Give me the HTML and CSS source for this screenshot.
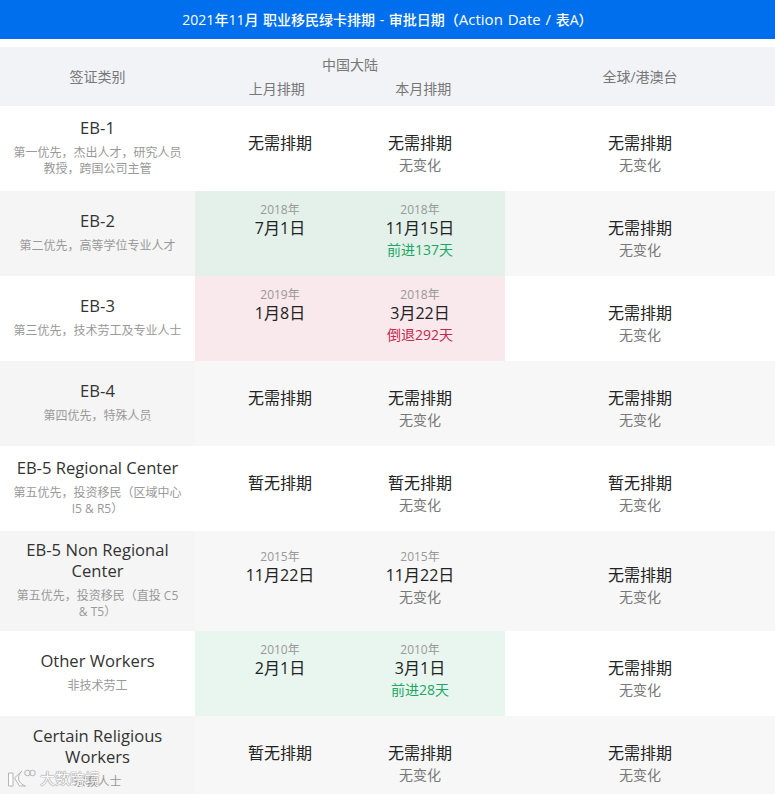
FILE: index.html
```html
<!DOCTYPE html>
<html lang="zh-CN">
<head>
<meta charset="utf-8">
<title>职业移民绿卡排期</title>
<link rel="stylesheet" href="styles.css">
</head>
<body>
<div class="page">
  <h1 class="banner">2021年11月 职业移民绿卡排期 - 审批日期（<span class="latin">Action Date /</span> 表A）</h1>
  <div class="table">
    <div class="row head">
      <div class="cat">签证类别</div>
      <div class="china">
        <div class="china-title">中国大陆</div>
        <div class="head-pair"><div>上月排期</div><div>本月排期</div></div>
      </div>
      <div class="world">全球/港澳台</div>
    </div>

    <div class="row">
      <div class="cat"><div class="name">EB-1</div><div class="desc">第一优先，杰出人才，研究人员<br>教授，跨国公司主管</div></div>
      <div class="pair">
        <div class="date"><div class="year"></div><div class="day">无需排期</div><div class="note"></div></div>
        <div class="date"><div class="year"></div><div class="day">无需排期</div><div class="note">无变化</div></div>
      </div>
      <div class="date world"><div class="year"></div><div class="day">无需排期</div><div class="note">无变化</div></div>
    </div>

    <div class="row alt">
      <div class="cat"><div class="name">EB-2</div><div class="desc">第二优先，高等学位专业人才</div></div>
      <div class="pair green">
        <div class="date"><div class="year">2018年</div><div class="day">7月1日</div><div class="note"></div></div>
        <div class="date"><div class="year">2018年</div><div class="day">11月15日</div><div class="note up">前进137天</div></div>
      </div>
      <div class="date world"><div class="year"></div><div class="day">无需排期</div><div class="note">无变化</div></div>
    </div>

    <div class="row">
      <div class="cat"><div class="name">EB-3</div><div class="desc">第三优先，技术劳工及专业人士</div></div>
      <div class="pair red">
        <div class="date"><div class="year">2019年</div><div class="day">1月8日</div><div class="note"></div></div>
        <div class="date"><div class="year">2018年</div><div class="day">3月22日</div><div class="note down">倒退292天</div></div>
      </div>
      <div class="date world"><div class="year"></div><div class="day">无需排期</div><div class="note">无变化</div></div>
    </div>

    <div class="row alt">
      <div class="cat"><div class="name">EB-4</div><div class="desc">第四优先，特殊人员</div></div>
      <div class="pair">
        <div class="date"><div class="year"></div><div class="day">无需排期</div><div class="note"></div></div>
        <div class="date"><div class="year"></div><div class="day">无需排期</div><div class="note">无变化</div></div>
      </div>
      <div class="date world"><div class="year"></div><div class="day">无需排期</div><div class="note">无变化</div></div>
    </div>

    <div class="row">
      <div class="cat"><div class="name">EB-5 Regional Center</div><div class="desc">第五优先，投资移民（区域中心<br>I5 &amp; R5）</div></div>
      <div class="pair">
        <div class="date"><div class="year"></div><div class="day">暂无排期</div><div class="note"></div></div>
        <div class="date"><div class="year"></div><div class="day">暂无排期</div><div class="note">无变化</div></div>
      </div>
      <div class="date world"><div class="year"></div><div class="day">暂无排期</div><div class="note">无变化</div></div>
    </div>

    <div class="row alt">
      <div class="cat"><div class="name">EB-5 Non Regional<br>Center</div><div class="desc">第五优先，投资移民（直投 C5<br>&amp; T5）</div></div>
      <div class="pair">
        <div class="date"><div class="year">2015年</div><div class="day">11月22日</div><div class="note"></div></div>
        <div class="date"><div class="year">2015年</div><div class="day">11月22日</div><div class="note">无变化</div></div>
      </div>
      <div class="date world"><div class="year"></div><div class="day">无需排期</div><div class="note">无变化</div></div>
    </div>

    <div class="row">
      <div class="cat"><div class="name">Other Workers</div><div class="desc">非技术劳工</div></div>
      <div class="pair mint">
        <div class="date"><div class="year">2010年</div><div class="day">2月1日</div><div class="note"></div></div>
        <div class="date"><div class="year">2010年</div><div class="day">3月1日</div><div class="note up">前进28天</div></div>
      </div>
      <div class="date world"><div class="year"></div><div class="day">无需排期</div><div class="note">无变化</div></div>
    </div>

    <div class="row alt">
      <div class="cat"><div class="name">Certain Religious<br>Workers</div><div class="desc">宗教人士</div></div>
      <div class="pair">
        <div class="date"><div class="year"></div><div class="day">暂无排期</div><div class="note"></div></div>
        <div class="date"><div class="year"></div><div class="day">无需排期</div><div class="note">无变化</div></div>
      </div>
      <div class="date world"><div class="year"></div><div class="day">无需排期</div><div class="note">无变化</div></div>
    </div>
  </div>
  <div class="watermark">
    <svg class="wm-icon" width="29" height="22" viewBox="0 0 29 22" fill="#fff" stroke="#aaa" stroke-width="1">
      <path d="M1.5 6h4.500v13H1.500z"/>
      <path d="M15 4 7.500 11l5 8h6c-3-1-7-3.500-7-8 0-2.500 1.500-5 3.500-7z"/>
      <circle cx="20.500" cy="6" r="2.800" fill="none"/>
      <circle cx="25.500" cy="6" r="2.800" fill="none"/>
    </svg>
    <span class="wm-text">大数跨境</span>
  </div>
</div>
</body>
</html>
```

FILE: styles.css
```css
* { box-sizing: border-box; }
html, body { margin: 0; padding: 0; }
body {
  background: #fff;
  font-family: "Open Sans", "Noto Sans CJK SC", sans-serif;
  color: #222;
  overflow: hidden;
  height: 794px;
}
.page { position: relative; width: 775px; height: 794px; overflow: hidden; }
.banner {
  margin: 0 0 8px;
  height: 39px;
  background: #006fee;
  color: #fff;
  font-size: 14px;
  font-weight: 500;
  word-spacing: 1px;
  line-height: 39px;
  text-align: center;
}
.latin { font-size: 15px; }
.row {
  display: grid;
  grid-template-columns: 195px 310px 270px;
  min-height: 85px;
  background: #fff;
}
.row.alt { background: #f7f7f7; }
.row.alt .cat { background: #f5f5f5; }
.row.head {
  min-height: 59px;
  background: #f1f3f7;
  color: #777;
  font-size: 14px;
  line-height: 20px;
}
.row.head .cat, .row.head .world { display: flex; align-items: center; justify-content: center; padding: 0; }
.china { padding-top: 8px; text-align: center; }
.china-title { height: 24px; }
.head-pair { display: grid; grid-template-columns: 146.5px 146.5px; justify-content: center; }
.cat {
  display: flex;
  flex-direction: column;
  justify-content: center;
  padding: 8px 10px 11px;
  text-align: center;
}
.name { font-size: 16.6px; line-height: 21px; color: #333; }
.desc { margin-top: 7px; font-size: 12px; line-height: 16px; color: #999; }
.pair {
  display: grid;
  grid-template-columns: 140px 140px;
  padding: 0 15px;
  text-align: center;
}
.green { background: #e3f1ea; }
.mint { background: #e9f6ef; }
.red { background: #f9e8ec; }
.date {
  align-self: center;
  padding-bottom: 5px;
  text-align: center;
}
.world { text-align: center; }
.year { height: 15px; font-size: 12px; line-height: 14px; color: #999; }
.day { height: 22px; font-size: 16px; line-height: 21px; color: #222; }
.note { height: 20px; font-size: 14px; line-height: 20px; color: #777; }
.note.up { color: #1aa663; }
.note.down { color: #c7264f; }
.watermark {
  position: absolute;
  left: 7px;
  top: 767px;
  display: flex;
  align-items: center;
  gap: 4px;
  opacity: .85;
}
.wm-text {
  font-size: 15px;
  line-height: 22px;
  color: #fff;
  text-shadow: 0 0 1px #888, 0 0 1px #888, 0 0 1px #888;
}
```
